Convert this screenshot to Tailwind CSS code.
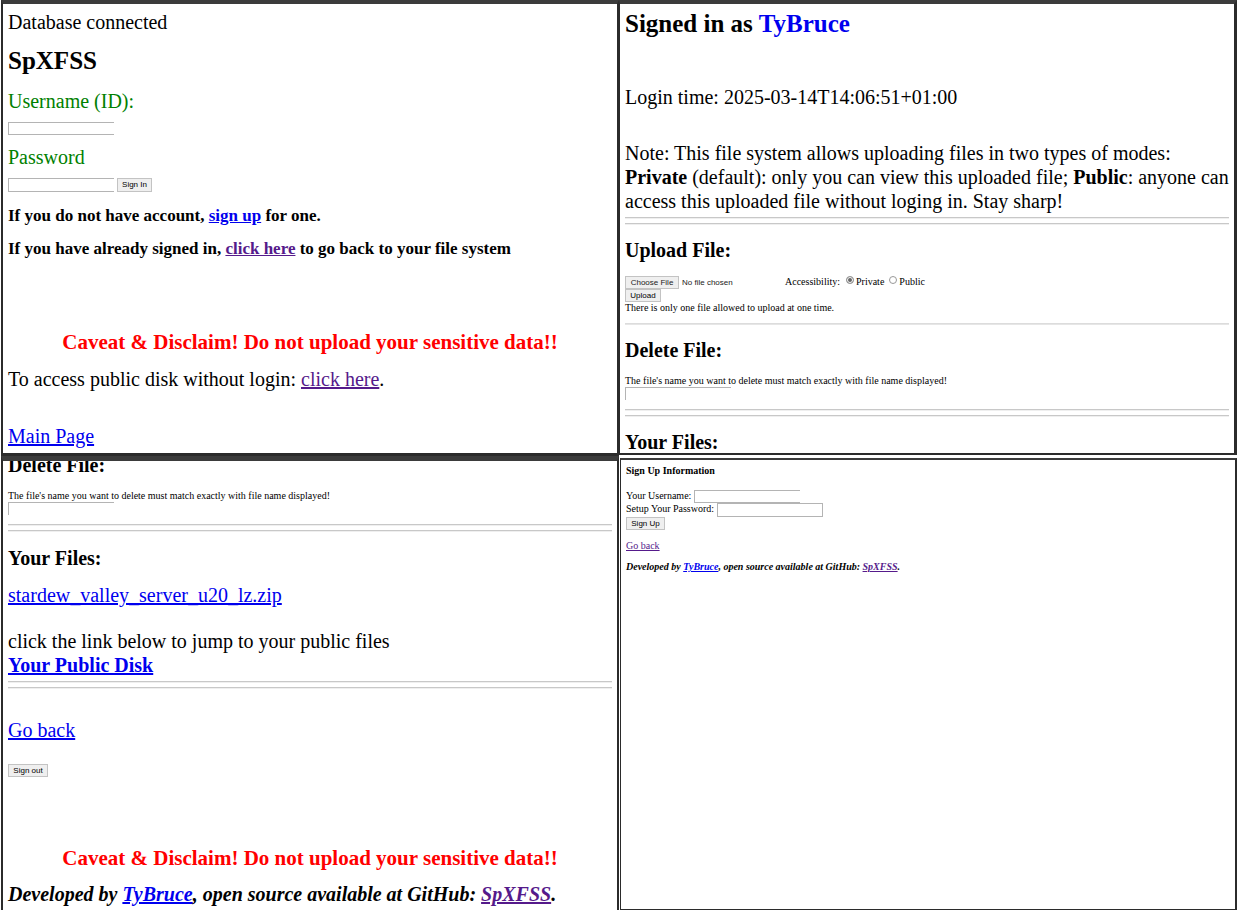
<!DOCTYPE html>
<html lang="en">
<head>
<meta charset="utf-8">
<title>SpXFSS</title>
<script src="https://cdn.jsdelivr.net/npm/@tailwindcss/browser@4"></script>
</head>
<body class="bg-white text-black font-['Liberation_Serif',serif]">
<main class="grid grid-cols-2 pl-px pr-[2px]">

  <!-- Login -->
  <section class="overflow-hidden border-t-4 border-r-2 border-b-3 border-l-2 border-[#2b2b2b] border-t-[#3b3b3b] px-[5px] pt-[6px] pb-[5px] text-[20px] leading-6">
    <p>Database connected</p>
    <h1 class="mt-[13px] text-[25px] leading-7 font-bold">SpXFSS</h1>
    <form>
      <label for="user" class="mt-[14px] block text-[#008000]">Username (ID):</label>
      <input id="user" type="text" class="mt-[9px] block h-[13px] w-[106px] border border-r-0 border-[#b4b4b4] px-px text-[8px]">
      <label for="pass" class="mt-[10px] block text-[#008000]">Password</label>
      <div class="mt-[9px] flex gap-[3px]">
        <input id="pass" type="password" class="h-[14px] w-[106px] border border-r-0 border-[#b4b4b4] px-px text-[8px]">
        <button type="button" class="h-[14px] w-[35px] border border-[#c3c3c3] bg-[#efefef] font-['Liberation_Sans',sans-serif] text-[8px] leading-3 text-black">Sign In</button>
      </div>
    </form>
    <h4 class="mt-[14px] text-[17px] leading-5 font-bold">If you do not have account, <a href="#signup" class="text-[#0000ee] underline">sign up</a> for one.</h4>
    <h4 class="mt-[13px] text-[17px] leading-5 font-bold">If you have already signed in, <a href="#files" class="text-[#551a8b] underline">click here</a> to go back to your file system</h4>
    <h3 class="mt-[71px] text-center text-[21px] font-bold text-[#ff0000]">Caveat &amp; Disclaim! Do not upload your sensitive data!!</h3>
    <p class="mt-[13px]">To access public disk without login: <a href="#public" class="text-[#551a8b] underline">click here</a>.</p>
    <p class="mt-[33px]"><a href="#main" class="text-[#0000ee] underline">Main Page</a></p>
  </section>

  <!-- File system, top part -->
  <section class="mb-px overflow-hidden border-t-4 border-r-3 border-b-2 border-l border-[#2b2b2b] border-t-[#3b3b3b] px-[5px] pt-[6px] text-[10px] leading-3">
    <h2 class="text-[25px] leading-7 font-bold">Signed in as <span class="text-[#0000ee]">TyBruce</span></h2>
    <p class="mt-[47px] text-[20px] leading-6">Login time: 2025-03-14T14:06:51+01:00</p>
    <p class="mt-8 text-[20px] leading-6">Note: This file system allows uploading files in two types of modes:<br><b>Private</b> (default): only you can view this uploaded file; <b>Public</b>: anyone can<br>access this uploaded file without loging in. Stay sharp!</p>
    <hr class="mt-1 h-[2px] border-t border-b border-[#c8c8c8] border-b-[#efefef]">
    <hr class="mt-1 h-[2px] border-t border-b border-[#c8c8c8] border-b-[#efefef]">
    <h3 class="mt-[14px] text-[20px] leading-[22px] font-bold">Upload File:</h3>
    <form class="mt-[15px]">
      <div class="flex h-[13px]">
        <input type="file" aria-label="File to upload" class="h-[13px] w-40 font-['Liberation_Sans',sans-serif] text-[8px] leading-[13px] text-[#222] file:me-[3px] file:h-[13px] file:w-[54px] file:border file:border-solid file:border-[#c3c3c3] file:bg-[#efefef] file:p-0 file:text-[8px] file:leading-[11px]">
        <span class="mr-[6px]">Accessibility:</span>
        <label class="mr-[5px] flex gap-[2px]"><input type="radio" name="access" checked class="size-2 appearance-none rounded-full border border-[#999] checked:bg-[#666] checked:shadow-[inset_0_0_0_1px_white]">Private</label>
        <label class="flex gap-[2px]"><input type="radio" name="access" class="size-2 appearance-none rounded-full border border-[#999] checked:bg-[#666] checked:shadow-[inset_0_0_0_1px_white]">Public</label>
      </div>
      <button type="button" class="block h-[13px] w-9 border border-[#c3c3c3] bg-[#efefef] font-['Liberation_Sans',sans-serif] text-[8px] leading-[11px] text-black">Upload</button>
    </form>
    <p>There is only one file allowed to upload at one time.</p>
    <hr class="mt-[9px] h-[2px] border-t border-b border-[#dcdcdc] border-b-[#e6e6e6]">
    <h3 class="mt-[14px] text-[20px] leading-[22px] font-bold">Delete File:</h3>
    <label for="del" class="mt-[14px] block">The file's name you want to delete must match exactly with file name displayed!</label>
    <input id="del" type="text" class="block h-[13px] w-[106px] border-t border-l border-[#b4b4b4] px-px text-[8px]">
    <hr class="mt-[9px] h-[2px] border-t border-b border-[#c8c8c8] border-b-[#efefef]">
    <hr class="mt-1 h-[2px] border-t border-b border-[#c8c8c8] border-b-[#efefef]">
    <h3 class="mt-[14px] text-[20px] leading-[22px] font-bold">Your Files:</h3>
  </section>

  <!-- File system, scrolled to the bottom -->
  <section class="overflow-hidden border-t-5 border-r-2 border-l-2 border-[#2b2b2b] border-t-[#3b3b3b] px-[5px] pb-1 text-[20px] leading-6">
    <h3 class="-mt-[7px] leading-[22px] font-bold">Delete File:</h3>
    <label for="del2" class="mt-[14px] block text-[10px] leading-3">The file's name you want to delete must match exactly with file name displayed!</label>
    <input id="del2" type="text" class="block h-[13px] w-[106px] border-t border-l border-[#b4b4b4] px-px text-[8px]">
    <hr class="mt-[9px] h-[2px] border-t border-b border-[#c8c8c8] border-b-[#efefef]">
    <hr class="mt-1 h-[2px] border-t border-b border-[#c8c8c8] border-b-[#efefef]">
    <h3 class="mt-[15px] leading-[22px] font-bold">Your Files:</h3>
    <p class="mt-[14px]"><a href="#zip" class="text-[#0000ee] underline">stardew_valley_server_u20_lz.zip</a></p>
    <p class="mt-[22px]">click the link below to jump to your public files<br><a href="#public" class="font-bold text-[#0000ee] underline">Your Public Disk</a></p>
    <hr class="mt-1 h-[2px] border-t border-b border-[#c8c8c8] border-b-[#efefef]">
    <hr class="mt-1 h-[2px] border-t border-b border-[#c8c8c8] border-b-[#efefef]">
    <p class="mt-[29px]"><a href="#back" class="text-[#0000ee] underline">Go back</a></p>
    <button type="button" class="mt-[22px] block h-[13px] w-10 border border-[#c3c3c3] bg-[#efefef] font-['Liberation_Sans',sans-serif] text-[8px] leading-[11px] text-black">Sign out</button>
    <h3 class="mt-[69px] text-center text-[21px] font-bold text-[#ff0000]">Caveat &amp; Disclaim! Do not upload your sensitive data!!</h3>
    <p class="mt-3 font-bold italic">Developed by <a href="#author" class="text-[#0000ee] underline">TyBruce</a>, open source available at GitHub: <a href="#repo" class="text-[#551a8b] underline">SpXFSS</a>.</p>
  </section>

  <!-- Sign up -->
  <section class="mt-[2px] ml-px overflow-hidden border-t-2 border-r-2 border-b border-l border-[#2b2b2b] border-t-[#3b3b3b] px-[5px] pt-[5px] text-[10px] leading-3">
    <h4 class="font-bold">Sign Up Information</h4>
    <form class="mt-[13px]">
      <div class="flex h-[13px] gap-[3px]">
        <label for="newuser">Your Username:</label>
        <input id="newuser" type="text" class="h-[13px] w-[106px] border border-r-0 border-[#b4b4b4] px-px text-[8px]">
      </div>
      <div class="flex h-[14px] gap-[3px]">
        <label for="newpass">Setup Your Password:</label>
        <input id="newpass" type="password" class="h-[14px] w-[106px] border border-[#b4b4b4] px-px text-[8px]">
      </div>
      <button type="button" class="block h-[13px] w-[39px] border border-[#c3c3c3] bg-[#efefef] font-['Liberation_Sans',sans-serif] text-[8px] leading-[11px] text-black">Sign Up</button>
    </form>
    <p class="mt-[10px]"><a href="#back" class="text-[#551a8b] underline">Go back</a></p>
    <p class="mt-[9px] font-bold italic">Developed by <a href="#author" class="text-[#0000ee] underline">TyBruce</a>, open source available at GitHub: <a href="#repo" class="text-[#551a8b] underline">SpXFSS</a>.</p>
  </section>

</main>
</body>
</html>
